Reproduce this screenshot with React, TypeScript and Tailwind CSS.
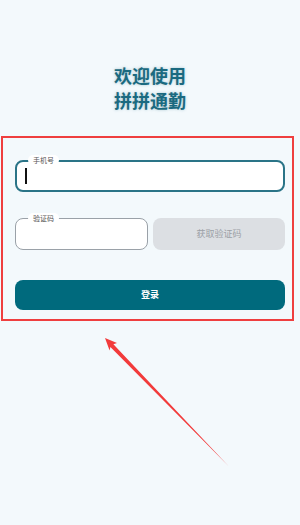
export default function App() {
  return (
    <div
      className="relative min-h-[525px] w-[300px] overflow-hidden bg-[#f3f9fc]"
      style={{ fontFamily: '"Noto Sans CJK SC", "Noto Sans", sans-serif' }}
    >
      <div className="flex flex-col items-center pt-[63px] text-[18px] font-bold leading-[25px] text-[#1b6a80] [text-shadow:0_0_3px_rgba(27,106,128,0.35)]">
        <span>欢迎使用</span>
        <span>拼拼通勤</span>
      </div>

      <div className="ml-[1px] mt-[23px] w-[293px] border-2 border-[#ef3f3f] pl-[12px] pr-[7px] pt-[22px] pb-[9px]">
        <div className="relative h-[32px] w-[270px] rounded-[8px] border-2 border-[#2a7487] bg-white">
          <span className="absolute -top-[7px] left-[11px] rounded-full bg-white px-[5px] text-[7px] leading-[10px] text-[#555]">
            手机号
          </span>
          <span className="absolute left-[8px] top-[6px] h-[16px] w-[2px] bg-[#111]" />
        </div>

        <div className="mt-[26px] flex w-[270px] gap-[5px]">
          <div className="relative h-[32px] w-[133px] rounded-[8px] border border-[#9aa1a8] bg-white">
            <span className="absolute -top-[6px] left-[12px] rounded-full bg-white px-[5px] text-[7px] leading-[10px] text-[#555]">
              验证码
            </span>
          </div>
          <div className="flex h-[32px] flex-1 items-center justify-center rounded-[8px] bg-[#dcdfe3] text-[9px] text-[#9ba0a6]">
            获取验证码
          </div>
        </div>

        <div className="mt-[30px] flex h-[30px] w-[270px] items-center justify-center rounded-[8px] bg-[#006a7d] text-[9px] font-bold text-white">
          登录
        </div>
      </div>

      <svg className="absolute left-0 top-0" width="300" height="525" viewBox="0 0 300 525">
        <polygon
          points="105,338 117,343 113.4,344.2 228.5,466 110.4,347 109.6,350.5"
          fill="#f23b3b"
        />
      </svg>
    </div>
  )
}
